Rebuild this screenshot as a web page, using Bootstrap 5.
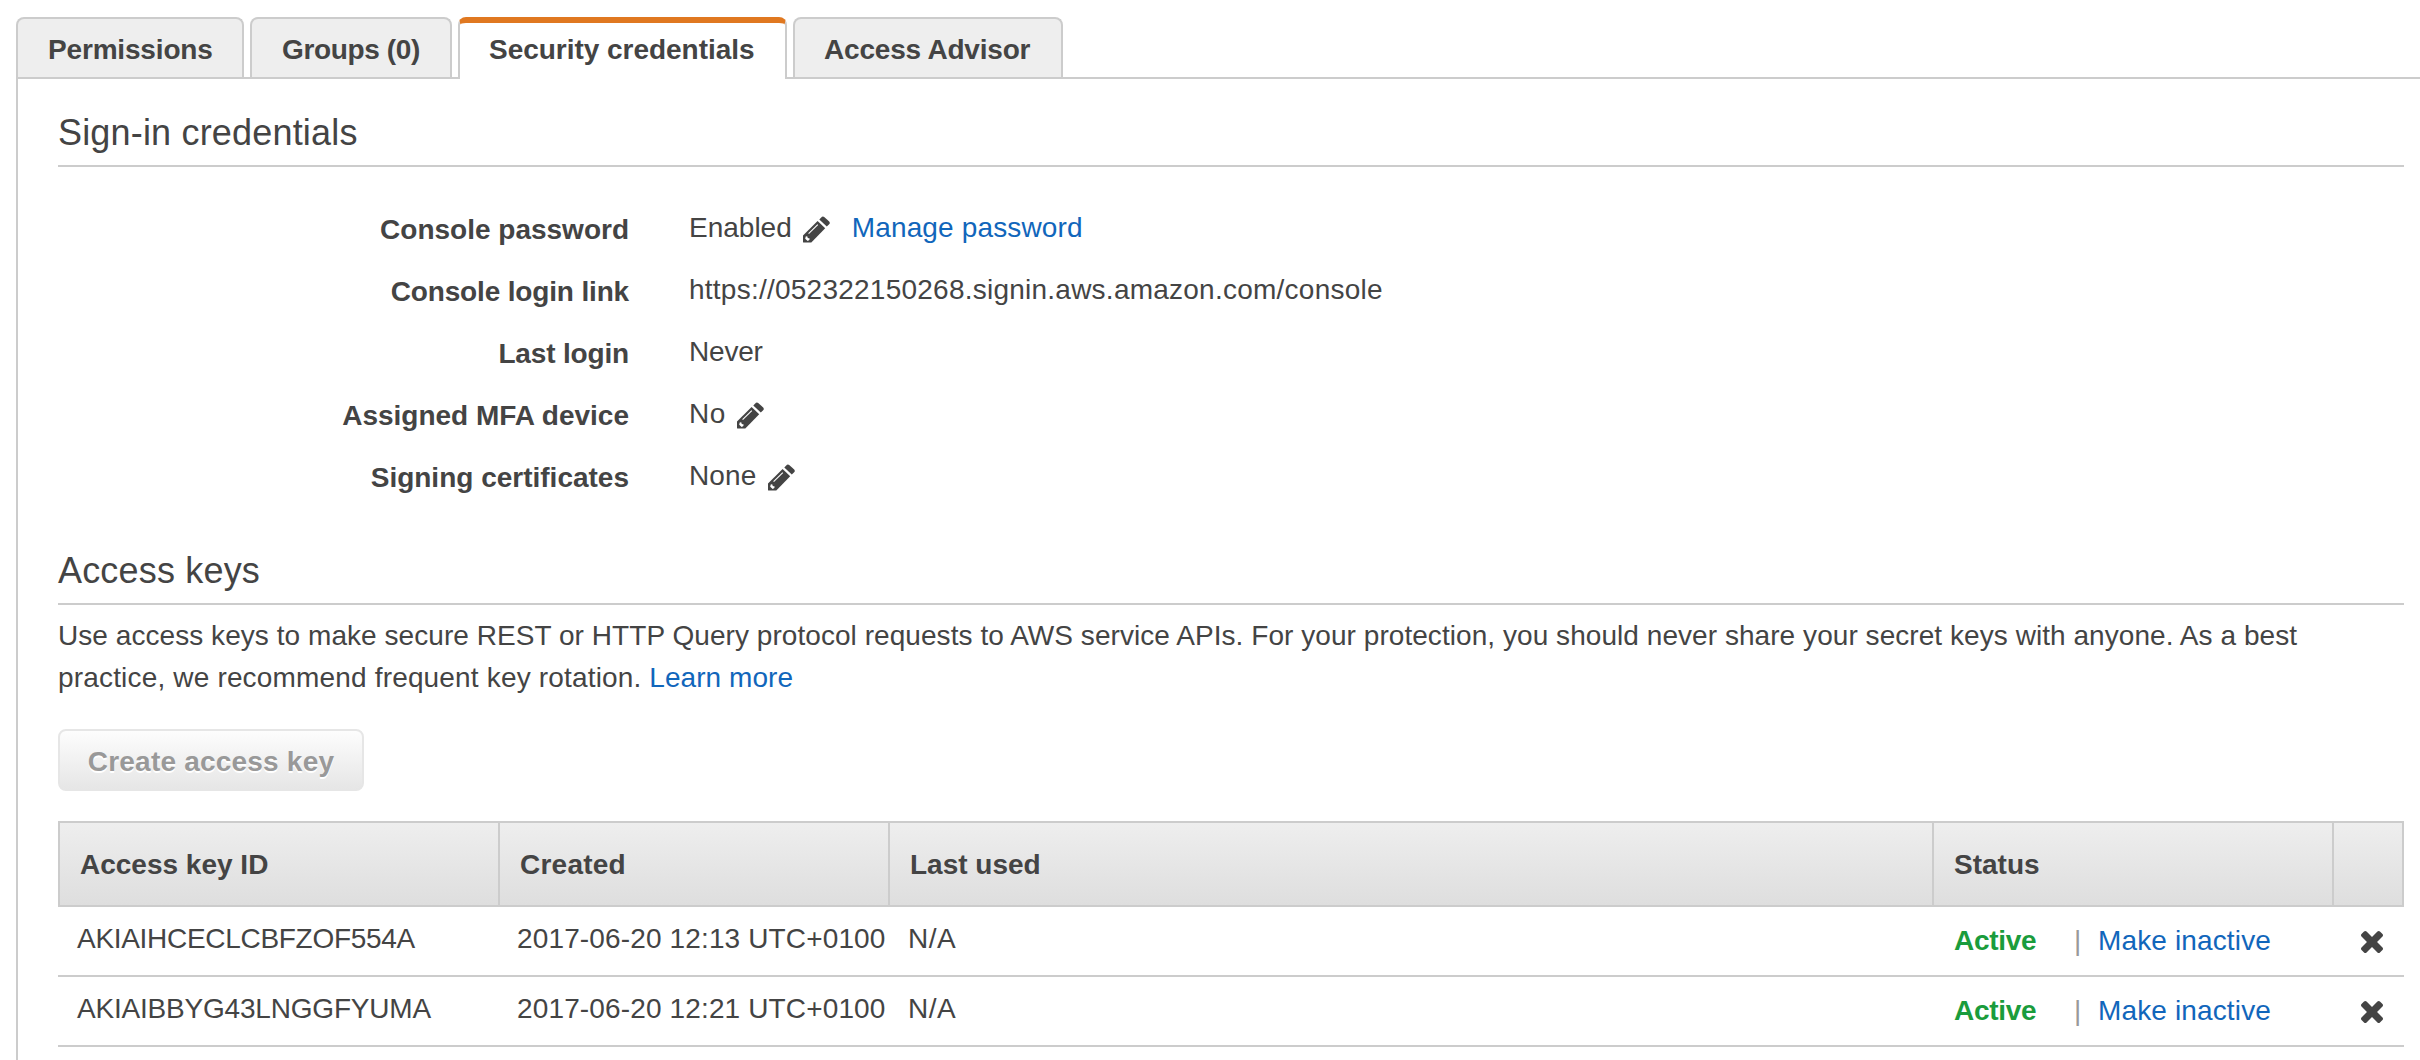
<!DOCTYPE html>
<html lang="en">
<head>
<meta charset="utf-8">
<meta name="viewport" content="width=device-width, initial-scale=1">
<title>Security credentials</title>
<link href="https://cdn.jsdelivr.net/npm/bootstrap@5.3.0/dist/css/bootstrap.min.css" rel="stylesheet">
<style>
  html, body { height: 100%; }
  body {
    font-family: "Liberation Sans", Arial, sans-serif;
    font-size: 28px; line-height: 42px; color: #444; background: #fff;
    padding: 17px 0 0 16px; overflow: hidden;
  }
  a { color: #1166bb; text-decoration: none; }
  .icon-defs { position: absolute; }

  /* tabs */
  .iam-tabs { height: 62px; border-bottom: 2px solid #ccc; gap: 6px; }
  .iam-tabs .nav-link {
    height: 60px; margin: 0; padding: 3px 0 0 30px;
    border: 2px solid #ccc; border-bottom: 0; border-radius: 8px 8px 0 0;
    background: #eee; color: #444; font-weight: 700; line-height: 56px; white-space: nowrap;
  }
  .iam-tabs .nav-link:hover { border-color: #ccc; color: #444; }
  .iam-tabs .nav-link.active {
    height: 62px; margin-bottom: -2px; padding-top: 0; padding-left: 29px; line-height: 54px;
    background: #fff; color: #444; border-color: #ccc; border-top: 6px solid #e07820;
  }
  .tab-perm { width: 228px; letter-spacing: -.17px; }
  .tab-groups { width: 202px; letter-spacing: -.36px; }
  .tab-sec { width: 329px; letter-spacing: -.03px; }
  .tab-adv { width: 270px; letter-spacing: -.2px; }
  .iam-tabs .tab-adv { padding-left: 29px; }

  .iam-panel { border-left: 2px solid #ccc; padding: 0 16px 0 40px; min-height: 981px; }
  .iam-heading {
    font-size: 36px; line-height: 42px; font-weight: 400; letter-spacing: .18px; color: #444;
    padding: 33px 0 11px; margin: 0; border-bottom: 2px solid #ccc;
  }

  /* label / value rows */
  .cred-list { padding-top: 31px; margin-bottom: 9px; }
  .cred-row { height: 62px; }
  .cred-row dt { width: 571px; margin-right: 60px; text-align: right; line-height: 64px; }
  .cred-row dd { margin: 0; line-height: 59px; }
  .pencil-icon { width: 27px; height: 27px; margin: 18px 22px 0 11px; fill: #444; }
  .ls-a { letter-spacing: .14px; }
  .ls-b { letter-spacing: .24px; }
  .ls-c { letter-spacing: -.2px; }
  .ls-d { letter-spacing: -.16px; }
  .ls-e { letter-spacing: .5px; }

  .key-note { padding-top: 10px; margin: 0; letter-spacing: .055px; white-space: nowrap; }
  .key-note .ls-a { letter-spacing: .17px; }
  .btn-create, .btn-create:disabled {
    width: 306px; height: 62px; margin: 30px 0 30px; padding: 3px 0 0;
    font-size: 28px; line-height: 55px; font-weight: 700; letter-spacing: .21px;
    color: #999; text-shadow: 0 2px 0 #fff; opacity: 1;
    border: 2px solid #e6e6e6; border-radius: 8px;
    background: linear-gradient(#fdfdfd, #e6e6e6);
  }

  /* keys table */
  .key-table {
    width: 2346px; table-layout: fixed; border-collapse: separate; border-spacing: 0;
    margin: 0; color: #444; white-space: nowrap;
  }
  .key-table thead th {
    height: 86px; padding: 2px 0 0 20px; vertical-align: middle; line-height: 42px;
    border: 0 solid #ccc; border-width: 2px 2px 2px 0;
    background: linear-gradient(#eee, #dedede);
  }
  .key-table thead th:first-child { border-left-width: 2px; }
  .key-table tbody td {
    height: 70px; padding: 0 0 0 17px; vertical-align: top; line-height: 64px;
    border: 0 solid #ccc; border-bottom-width: 2px; background: transparent;
  }
  .key-table tbody td:first-child { padding-left: 19px; }
  .key-table tbody td.ls-e { padding-left: 18px; }
  .key-table tbody td.state-cell { padding-left: 20px; line-height: 68px; }
  .key-table tbody td.drop-cell { padding-left: 27px; }
  .state-on { width: 120px; font-weight: 700; color: #1a9c3c; letter-spacing: -.29px; }
  .state-bar { width: 24px; color: #999; }
  .cross-icon { display: block; width: 22px; height: 22px; margin-top: 24px; fill: #444; }
</style>
<script src="https://cdn.jsdelivr.net/npm/bootstrap@5.3.0/dist/js/bootstrap.bundle.min.js"></script>
</head>
<body>
<svg class="icon-defs" width="0" height="0" aria-hidden="true">
  <symbol id="pencil" viewBox="0 0 27 27">
    <path d="M16.3 3.4 19 .8Q20 0 21.2.9L26.2 5.600Q27.300 6.800 26.400 7.900L23.800 10.600Z"/>
    <path d="M14.600 5 22.200 12.200 8.300 26.600H.700Q0 26.600 0 25.900V19.400Z"/>
    <path d="M5.600 17.600 14.800 8.600" fill="none" stroke="#fff" stroke-width="1.100"/>
    <path d="M2.700 20.600 4.200 20.200 4.800 22 6.700 22.600 6.300 24 4.700 25 2.200 22.800Z" fill="#fff"/>
  </symbol>
  <symbol id="cross" viewBox="302 366 1188 1188"><path d="M1490 1322q0 40-28 68l-136 136q-28 28-68 28t-68-28l-294-294-294 294q-28 28-68 28t-68-28l-136-136q-28-28-28-68t28-68l294-294-294-294q-28-28-28-68t28-68l136-136q28-28 68-28t68 28l294 294 294-294q28-28 68-28t68 28l136 136q28 28 28 68t-28 68l-294 294 294 294q28 28 28 68z"/></symbol>
</svg>

<ul class="nav nav-tabs iam-tabs flex-nowrap">
  <li class="nav-item"><a class="nav-link tab-perm" href="#">Permissions</a></li>
  <li class="nav-item"><a class="nav-link tab-groups" href="#">Groups (0)</a></li>
  <li class="nav-item"><a class="nav-link tab-sec active" href="#">Security credentials</a></li>
  <li class="nav-item"><a class="nav-link tab-adv" href="#">Access Advisor</a></li>
</ul>

<main class="iam-panel">
  <h2 class="iam-heading">Sign-in credentials</h2>
  <dl class="cred-list">
    <div class="cred-row d-flex">
      <dt>Console password</dt>
      <dd class="d-flex"><span>Enabled</span><svg class="pencil-icon"><use href="#pencil"/></svg><a class="ls-a" href="#">Manage password</a></dd>
    </div>
    <div class="cred-row d-flex">
      <dt class="ls-d">Console login link</dt>
      <dd class="ls-b">https://052322150268.signin.aws.amazon.com/console</dd>
    </div>
    <div class="cred-row d-flex">
      <dt class="ls-d">Last login</dt>
      <dd class="ls-c">Never</dd>
    </div>
    <div class="cred-row d-flex">
      <dt>Assigned MFA device</dt>
      <dd class="d-flex"><span class="ls-e">No</span><svg class="pencil-icon"><use href="#pencil"/></svg></dd>
    </div>
    <div class="cred-row d-flex">
      <dt>Signing certificates</dt>
      <dd class="d-flex"><span class="ls-a">None</span><svg class="pencil-icon"><use href="#pencil"/></svg></dd>
    </div>
  </dl>

  <h2 class="iam-heading">Access keys</h2>
  <p class="key-note">Use access keys to make secure REST or HTTP Query protocol requests to AWS service APIs. For your protection, you should never share your secret keys with anyone. As a best<br><span class="ls-a">practice, we recommend frequent key rotation.</span> <a href="#">Learn more</a></p>
  <button type="button" class="btn btn-create d-block" disabled>Create access key</button>

  <table class="table key-table">
    <colgroup>
      <col style="width:442px"><col style="width:390px"><col style="width:1044px"><col style="width:400px"><col style="width:70px">
    </colgroup>
    <thead>
      <tr><th>Access key ID</th><th class="ls-b">Created</th><th>Last used</th><th>Status</th><th></th></tr>
    </thead>
    <tbody>
      <tr>
        <td><span style="letter-spacing:-.3px">AKIAIHCECLCBFZOF554A</span></td>
        <td class="ls-a">2017-06-20 12:13 UTC+0100</td>
        <td class="ls-e">N/A</td>
        <td class="state-cell"><div class="d-flex"><span class="state-on">Active</span><span class="state-bar">|</span><a class="ls-a" href="#">Make inactive</a></div></td>
        <td class="drop-cell"><svg class="cross-icon"><use href="#cross"/></svg></td>
      </tr>
      <tr>
        <td><span style="letter-spacing:-.2px">AKIAIBBYG43LNGGFYUMA</span></td>
        <td class="ls-a">2017-06-20 12:21 UTC+0100</td>
        <td class="ls-e">N/A</td>
        <td class="state-cell"><div class="d-flex"><span class="state-on">Active</span><span class="state-bar">|</span><a class="ls-a" href="#">Make inactive</a></div></td>
        <td class="drop-cell"><svg class="cross-icon"><use href="#cross"/></svg></td>
      </tr>
    </tbody>
  </table>
</main>
</body>
</html>
